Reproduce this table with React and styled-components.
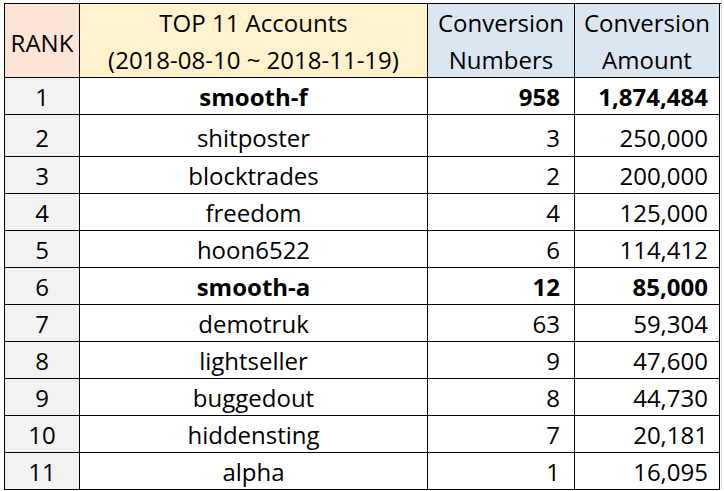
import React from "react";
import styled, { createGlobalStyle } from "styled-components";

const GlobalStyle = createGlobalStyle`
  html, body {
    margin: 0;
    padding: 0;
    background: #ffffff;
  }
  body {
    font-family: "Open Sans", "Liberation Sans", sans-serif;
    color: #000;
  }
`;

const Page = styled.div`
  width: 722px;
  padding: 3px 0 0 4px;
  box-sizing: border-box;
  border-right: 1px solid #dadada;
  background: linear-gradient(#dadada, #dadada) 79px 0 / 1px 3px no-repeat;
`;

const Sheet = styled.div`
  display: grid;
  grid-template-columns: 75px 348px 147px 145px;
  width: 716px;
  border-left: 1px solid #000;
  border-top: 1px solid #000;
`;

const Cell = styled.div`
  display: flex;
  align-items: center;
  justify-content: ${(p) => p.$align || "center"};
  height: ${(p) => p.$h}px;
  box-sizing: border-box;
  border-right: 1px solid #000;
  border-bottom: 1px solid #000;
  background: ${(p) => p.$bg || "#fff"};
  padding: ${(p) => (p.$align === "flex-end" ? `0 ${p.$pad}px 0 0` : "0")};
  padding-top: ${(p) => p.$top || 0}px;
  font-size: 24px;
  font-weight: ${(p) => (p.$bold ? 700 : 400)};
  line-height: 1;
  white-space: nowrap;
`;

const HeadCell = styled(Cell)`
  flex-direction: column;
  line-height: 37px;
  text-align: center;
`;

const rows = [
  ["smooth-f", "958", "1,874,484", true],
  ["shitposter", "3", "250,000"],
  ["blocktrades", "2", "200,000"],
  ["freedom", "4", "125,000"],
  ["hoon6522", "6", "114,412"],
  ["smooth-a", "12", "85,000", true],
  ["demotruk", "63", "59,304"],
  ["lightseller", "9", "47,600"],
  ["buggedout", "8", "44,730"],
  ["hiddensting", "7", "20,181"],
  ["alpha", "1", "16,095"],
];

export default function App() {
  return (
    <Page>
      <GlobalStyle />
      <Sheet>
        <HeadCell $h={74} $bg="#fce4d6" $top={4}>RANK</HeadCell>
        <HeadCell $h={74} $bg="#fff2cc">
          <span>TOP 11 Accounts</span>
          <span>(2018-08-10 ~ 2018-11-19)</span>
        </HeadCell>
        <HeadCell $h={74} $bg="#dce6f1">
          <span>Conversion</span>
          <span>Numbers</span>
        </HeadCell>
        <HeadCell $h={74} $bg="#dce6f1">
          <span>Conversion</span>
          <span>Amount</span>
        </HeadCell>
        {rows.map(([name, num, amt, bold], i) => {
          const h = i === 1 ? 42 : 37;
          const top = i === 1 ? 4 : 1;
          return (
            <React.Fragment key={name}>
              <Cell $h={h} $bg="#f2f2f2" $top={top}>{i + 1}</Cell>
              <Cell $h={h} $bold={bold} $top={top}>{name}</Cell>
              <Cell $h={h} $bold={bold} $top={top} $align="flex-end" $pad={14}>{num}</Cell>
              <Cell $h={h} $bold={bold} $top={top} $align="flex-end" $pad={11}>{amt}</Cell>
            </React.Fragment>
          );
        })}
      </Sheet>
    </Page>
  );
}
